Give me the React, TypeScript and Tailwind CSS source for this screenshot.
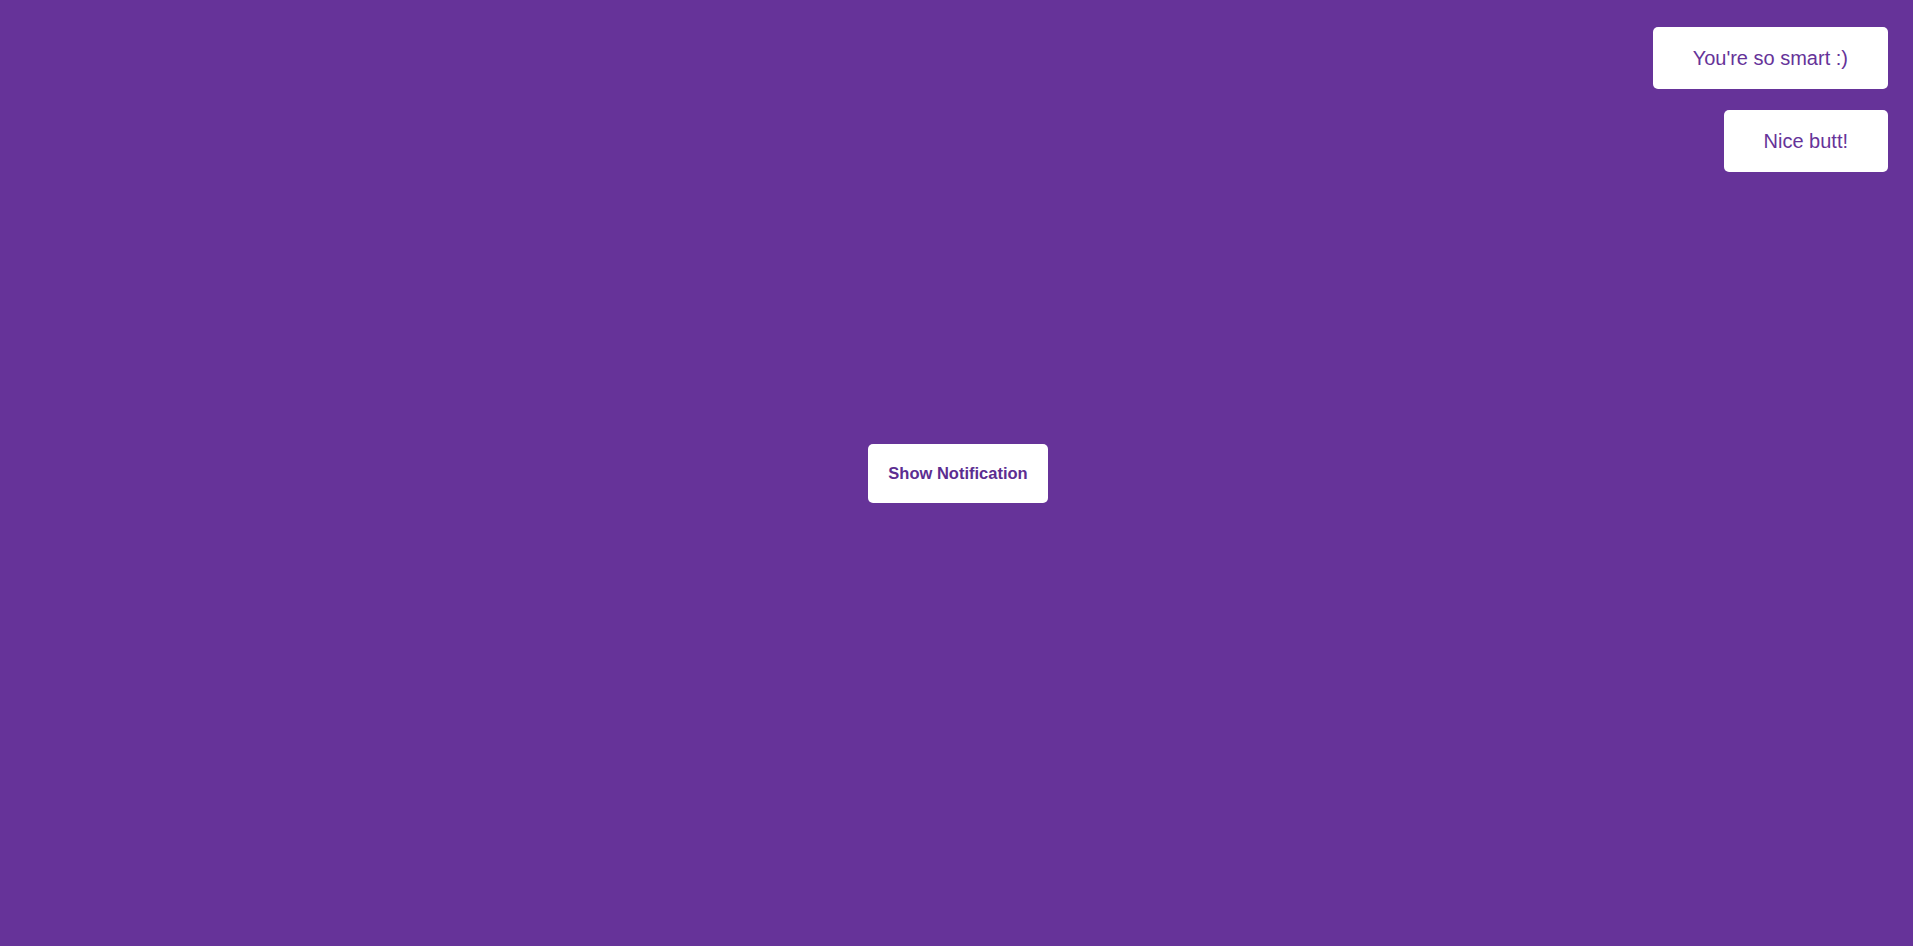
import React from "react";

const toasts = ["You're so smart :)", "Nice butt!"];

export default function App() {
  return (
    <main
      className="relative flex h-screen w-full items-center justify-center bg-[#663399]"
      style={{ fontFamily: '"Liberation Sans", Arial, sans-serif' }}
    >
      {/* Notifications */}
      <div className="absolute right-[25px] top-[27px] flex flex-col items-end gap-[21px]">
        {toasts.map((t) => (
          <div
            key={t}
            className="flex h-[62px] items-center rounded-[5px] bg-white px-[40px] text-[20px] text-[#663399]"
          >
            {t}
          </div>
        ))}
      </div>

      <button
        type="button"
        className="ml-[3px] h-[59px] rounded-[5px] bg-white px-[20px] text-[16.5px] font-bold text-[#5c2d91]"
      >
        Show Notification
      </button>
    </main>
  );
}
